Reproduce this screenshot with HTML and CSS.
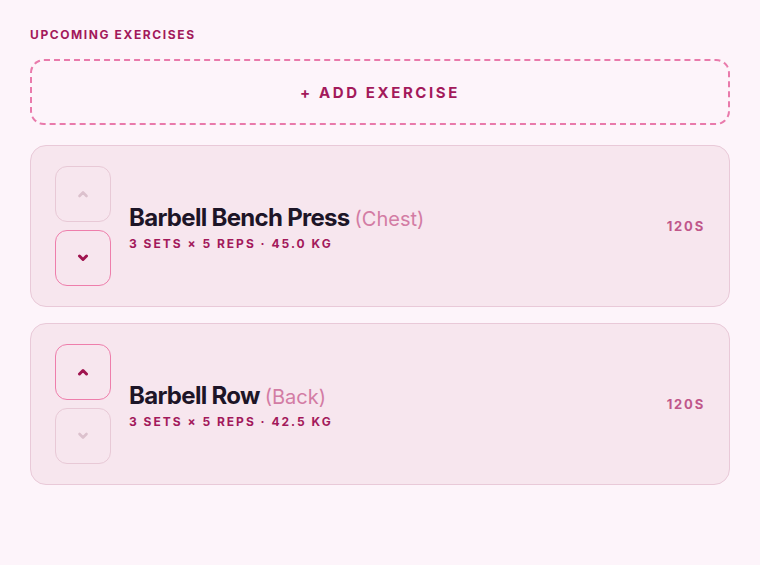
FILE: index.html
```html
<!DOCTYPE html>
<html lang="en">
<head>
  <meta charset="UTF-8">
  <title>Upcoming Exercises</title>
  <link rel="stylesheet" href="styles.css">
</head>
<body>

  <h2 class="section-label">Upcoming Exercises</h2>

  <button class="add-btn">+ Add Exercise</button>

  <!-- Exercise list -->
  <div class="exercise-list">
    <div class="exercise-card">
      <div class="move-btns">
        <button class="move-btn" disabled>
          <svg viewBox="0 0 12 8" width="12" height="8"><path d="M2.5 6 L6 2.5 L9.5 6" /></svg>
        </button>
        <button class="move-btn active">
          <svg viewBox="0 0 12 8" width="12" height="8"><path d="M2.5 2 L6 5.5 L9.5 2" /></svg>
        </button>
      </div>
      <div class="exercise-info">
        <div class="exercise-name">Barbell Bench Press <span class="muscle">(Chest)</span></div>
        <div class="exercise-meta">3 sets × 5 reps · 45.0 kg</div>
      </div>
      <div class="rest">120s</div>
    </div>

    <div class="exercise-card">
      <div class="move-btns">
        <button class="move-btn active">
          <svg viewBox="0 0 12 8" width="12" height="8"><path d="M2.5 6 L6 2.5 L9.5 6" /></svg>
        </button>
        <button class="move-btn" disabled>
          <svg viewBox="0 0 12 8" width="12" height="8"><path d="M2.5 2 L6 5.5 L9.5 2" /></svg>
        </button>
      </div>
      <div class="exercise-info">
        <div class="exercise-name">Barbell Row <span class="muscle">(Back)</span></div>
        <div class="exercise-meta">3 sets × 5 reps · 42.5 kg</div>
      </div>
      <div class="rest">120s</div>
    </div>
  </div>

</body>
</html>
```

FILE: styles.css
```css
body {
  margin: 0;
  padding: 27px 30px;
  background: #fdf4fa;
  font-family: Inter, "Liberation Sans", sans-serif;
  color: #1d1527;
}

.section-label {
  margin: 0 0 16px;
  font-size: 12px;
  font-weight: 700;
  letter-spacing: 1.6px;
  text-transform: uppercase;
  color: #a3195b;
  line-height: 16px;
}

.add-btn {
  display: block;
  width: 100%;
  height: 66px;
  border: 2px dashed #e97aab;
  border-radius: 14px;
  background: transparent;
  font-family: inherit;
  font-size: 15px;
  font-weight: 700;
  letter-spacing: 2.6px;
  text-transform: uppercase;
  color: #a3195b;
  cursor: pointer;
}

.exercise-list {
  display: flex;
  flex-direction: column;
  gap: 16px;
  margin-top: 20px;
}

.exercise-card {
  display: flex;
  align-items: center;
  gap: 18px;
  padding: 20px 24px;
  background: #f7e6ee;
  border: 1px solid #e9c9d8;
  border-radius: 16px;
}

.move-btns {
  display: flex;
  flex-direction: column;
  gap: 8px;
}

.move-btn {
  display: flex;
  align-items: center;
  justify-content: center;
  width: 56px;
  height: 56px;
  padding: 0;
  background: transparent;
  border: 1px solid #e8c9d6;
  border-radius: 12px;
  cursor: pointer;
}

.move-btn svg path {
  fill: none;
  stroke: #dcc1cd;
  stroke-width: 2.6;
  stroke-linecap: round;
  stroke-linejoin: round;
}

.move-btn.active {
  border-color: #ee7eab;
}

.move-btn.active svg path {
  stroke: #a0144f;
  stroke-width: 3;
}

.exercise-info {
  flex: 1;
  padding-top: 2px;
}

.exercise-name {
  font-size: 24px;
  font-weight: 700;
  letter-spacing: -0.7px;
  line-height: 28px;
}

.muscle {
  font-size: 20px;
  font-weight: 400;
  letter-spacing: 0;
  color: #d37ca4;
}

.exercise-meta {
  margin-top: 3px;
  font-size: 12px;
  font-weight: 700;
  letter-spacing: 2px;
  text-transform: uppercase;
  color: #a3195b;
}

.rest {
  font-size: 13px;
  font-weight: 700;
  letter-spacing: 1.8px;
  text-transform: uppercase;
  color: #c0578a;
}
```
